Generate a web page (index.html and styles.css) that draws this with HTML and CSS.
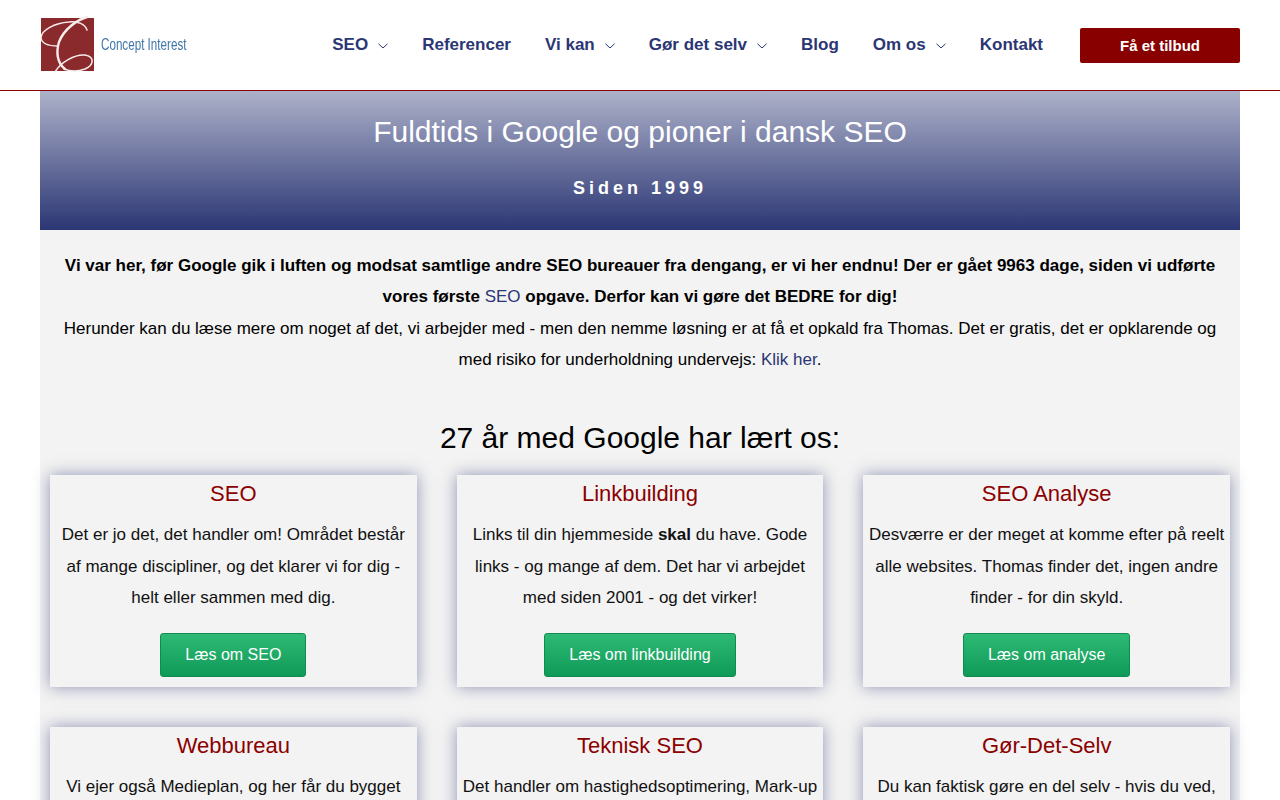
FILE: index.html
```html
<!DOCTYPE html>
<html lang="da">
<head>
<meta charset="utf-8">
<title>Concept Interest</title>
<link rel="stylesheet" href="styles.css">
</head>
<body>
<div class="page">
<header class="site-header">
  <a class="logo" href="#">
    <svg class="logo-mark" viewBox="0 0 53 53" width="53" height="53" aria-hidden="true">
      <rect width="53" height="53" fill="#8b2a2c"/>
      <g fill="none" stroke="#f6ecea" stroke-linecap="round">
        <path d="M46 -1C36 2 23 11 18 24C15 34 16 45 24 51" stroke-width="2.4"/>
        <path d="M17 28C9 28 1 26 0 20C0 12 14 5 28 4C37 3 44 6 46 12" stroke-width="1.5"/>
        <path d="M14 54C20 44 34 36 44 37C54 39 53 47 44 51C36 54 28 53 23 51" stroke-width="1.5"/>
      </g>
    </svg>
    <span class="logo-text">Concept Interest</span>
  </a>
  <nav class="main-nav">
    <a class="nav-link" href="#">SEO<svg class="caret" viewBox="0 0 10 6" width="10" height="6"><path d="M.5.8 5 5 9.5.8" fill="none" stroke="currentColor"/></svg></a>
    <a class="nav-link" href="#">Referencer</a>
    <a class="nav-link" href="#">Vi kan<svg class="caret" viewBox="0 0 10 6" width="10" height="6"><path d="M.5.8 5 5 9.5.8" fill="none" stroke="currentColor"/></svg></a>
    <a class="nav-link" href="#">Gør det selv<svg class="caret" viewBox="0 0 10 6" width="10" height="6"><path d="M.5.8 5 5 9.5.8" fill="none" stroke="currentColor"/></svg></a>
    <a class="nav-link" href="#">Blog</a>
    <a class="nav-link" href="#">Om os<svg class="caret" viewBox="0 0 10 6" width="10" height="6"><path d="M.5.8 5 5 9.5.8" fill="none" stroke="currentColor"/></svg></a>
    <a class="nav-link" href="#">Kontakt</a>
  </nav>
  <a class="cta" href="#">Få et tilbud</a>
</header>
<main class="content">
  <section class="hero">
    <h1 class="hero-title">Fuldtids i Google og pioner i dansk SEO</h1>
    <p class="hero-sub">Siden 1999</p>
  </section>
  <section class="intro">
    <p class="intro-lead">Vi var her, før Google gik i luften og modsat samtlige andre SEO bureauer fra dengang, er vi her endnu! Der er gået 9963 dage, siden vi udførte vores første <a class="link" href="#">SEO</a> opgave. Derfor kan vi gøre det BEDRE for dig!</p>
    <p class="intro-text">Herunder kan du læse mere om noget af det, vi arbejder med - men den nemme løsning er at få et opkald fra Thomas. Det er gratis, det er opklarende og med risiko for underholdning undervejs: <a class="link" href="#">Klik her</a>.</p>
  </section>
  <h2 class="section-title">27 år med Google har lært os:</h2>
  <section class="cards">
    <article class="card">
      <h3 class="card-title">SEO</h3>
      <p class="card-text">Det er jo det, det handler om! Området består af mange discipliner, og det klarer vi for dig - helt eller sammen med dig.</p>
      <a class="btn" href="#">Læs om SEO</a>
    </article>
    <article class="card">
      <h3 class="card-title">Linkbuilding</h3>
      <p class="card-text">Links til din hjemmeside <b>skal</b> du have. Gode links - og mange af dem. Det har vi arbejdet med siden 2001 - og det virker!</p>
      <a class="btn" href="#">Læs om linkbuilding</a>
    </article>
    <article class="card">
      <h3 class="card-title">SEO Analyse</h3>
      <p class="card-text">Desværre er der meget at komme efter på reelt alle websites. Thomas finder det, ingen andre finder - for din skyld.</p>
      <a class="btn" href="#">Læs om analyse</a>
    </article>
    <article class="card">
      <h3 class="card-title">Webbureau</h3>
      <p class="card-text">Vi ejer også Medieplan, og her får du bygget</p>
    </article>
    <article class="card">
      <h3 class="card-title">Teknisk SEO</h3>
      <p class="card-text">Det handler om hastighedsoptimering, Mark-up</p>
    </article>
    <article class="card">
      <h3 class="card-title">Gør-Det-Selv</h3>
      <p class="card-text">Du kan faktisk gøre en del selv - hvis du ved,</p>
    </article>
  </section>
</main>
</div>
</body>
</html>
```
FILE: styles.css
```css
* { box-sizing: border-box; }
html, body { margin: 0; padding: 0; background: #fff; }
body { font-family: "Liberation Sans", Arial, sans-serif; color: #000; }
a { text-decoration: none; }
.page { height: 800px; overflow: hidden; }

.site-header {
  height: 91px;
  padding: 0 40px;
  display: flex;
  align-items: center;
  border-bottom: 1px solid #8b0000;
}
.logo { display: flex; align-items: center; width: 150px; padding-left: 1px; gap: 7px; margin-top: -1px; filter: blur(.35px); }
.logo-mark { flex: none; overflow: visible; }
.logo-text {
  display: inline-block;
  font-size: 17px;
  line-height: 20px;
  color: #3f77a8;
  white-space: nowrap;
  transform: scaleX(.685);
  transform-origin: left center;
}
.main-nav { margin-left: auto; display: flex; align-items: center; gap: 34px; }
.nav-link {
  font-size: 17px;
  font-weight: 700;
  color: #2b3674;
  display: flex;
  align-items: center;
  white-space: nowrap;
}
.caret { margin-left: 10px; margin-top: 2px; }
.cta {
  width: 160px;
  height: 35px;
  margin-left: 37px;
  background: #880000;
  color: #fff;
  border-radius: 2px;
  font-size: 15px;
  font-weight: 700;
  display: flex;
  align-items: center;
  justify-content: center;
}

.content { width: 1200px; margin: 0 auto; background: #f3f3f3; }
.hero {
  height: 139px;
  padding-top: 23px;
  text-align: center;
  background: linear-gradient(#adb1c9, #2b3674);
  color: #fff;
}
.hero-title { margin: 0; font-size: 30px; line-height: 36px; font-weight: 400; }
.hero-sub { margin: 27px 0 0; font-size: 18px; line-height: 22px; font-weight: 700; letter-spacing: 4px; }

.intro { padding: 20px 10px 0; text-align: center; font-size: 17px; line-height: 31.45px; }
.intro p { margin: 0; }
.intro-lead { font-weight: 700; }
.link { color: #2b3674; font-weight: 400; }

.section-title { margin: 44.2px 0 19px; text-align: center; font-size: 30px; line-height: 36px; font-weight: 400; }

.cards {
  padding: 0 10px;
  display: grid;
  grid-template-columns: repeat(3, 1fr);
  column-gap: 40px;
  row-gap: 40px;
}
.card {
  background: #f3f3f3;
  box-shadow: 0 0 15px rgba(43, 54, 116, .5);
  padding: 4px 5px 10px;
  min-height: 212px;
  text-align: center;
}
.card-title { margin: 0; font-size: 22px; line-height: 30px; font-weight: 400; color: #8b0000; }
.card-text { margin: 10px 0 19px; font-size: 17px; line-height: 31.5px; color: #111; }
.btn {
  display: inline-block;
  height: 44px;
  line-height: 42px;
  padding: 0 24px;
  border: 1px solid #0f8a50;
  border-radius: 3px;
  background: linear-gradient(#2eb974, #0f9a58);
  color: #fff;
  font-size: 16px;
}
```
